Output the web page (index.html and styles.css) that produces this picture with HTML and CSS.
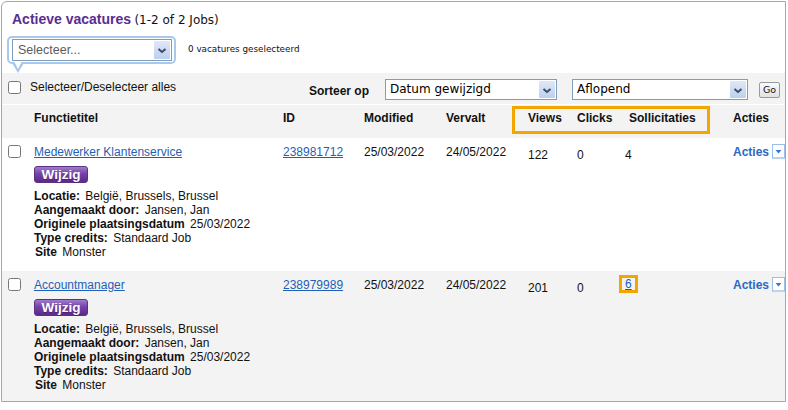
FILE: index.html
```html
<!DOCTYPE html>
<html lang="nl">
<head>
<meta charset="utf-8">
<title>Actieve vacatures</title>
<link rel="stylesheet" href="styles.css">
</head>
<body>
<div class="panel">
  <div class="title"><span class="t-main">Actieve vacatures</span> <span class="t-count">(1-2 of 2 Jobs)</span></div>

  <div class="bulk">
    <div class="bubble">
      <div class="select sel-bulk">
        <span class="sel-text">Selecteer...</span>
        <span class="sel-btn"><svg width="16" height="18" viewBox="0 0 16 18"><path d="M4.5 8 L8 11 L11.5 8" fill="none" stroke="#3d4b66" stroke-width="2"/></svg></span>
      </div>
    </div>
    <span class="bulk-count">0 vacatures geselecteerd</span>
  </div>

  <div class="toolbar">
    <label class="selall"><input type="checkbox" class="cb"><span>Selecteer/Deselecteer alles</span></label>
    <div class="sort">
      <span class="sort-label">Sorteer op</span>
      <div class="select sel-sort sel-sort1">
        <span class="sel-text">Datum gewijzigd</span>
        <span class="sel-btn"><svg width="16" height="17" viewBox="0 0 16 17"><path d="M4.5 8 L8 11 L11.5 8" fill="none" stroke="#3d4b66" stroke-width="2"/></svg></span>
      </div>
      <div class="select sel-sort sel-sort2">
        <span class="sel-text">Aflopend</span>
        <span class="sel-btn"><svg width="16" height="17" viewBox="0 0 16 17"><path d="M4.5 8 L8 11 L11.5 8" fill="none" stroke="#3d4b66" stroke-width="2"/></svg></span>
      </div>
      <button class="go" type="button">Go</button>
    </div>
  </div>

  <div class="grid head">
    <div></div>
    <div class="h">Functietitel</div>
    <div class="h">ID</div>
    <div class="h">Modified</div>
    <div class="h">Vervalt</div>
    <div class="h">Views</div>
    <div class="h">Clicks</div>
    <div class="h">Sollicitaties</div>
    <div class="h">Acties</div>
    <div class="hl-box"></div>
  </div>

  <div class="grid row">
    <div class="c-cb"><input type="checkbox" class="cb"></div>
    <div class="c">
      <a href="#" class="lnk">Medewerker Klantenservice</a>
      <div class="wijzig">Wijzig</div>
      <div class="details">
        <div><b>Locatie:</b> België, Brussels, Brussel</div>
        <div><b>Aangemaakt door:</b> Jansen, Jan</div>
        <div><b>Originele plaatsingsdatum</b> 25/03/2022</div>
        <div><b>Type credits:</b> Standaard Job</div>
        <div class="site"><b>Site</b> Monster</div>
      </div>
    </div>
    <div class="c"><a href="#" class="lnk">238981712</a></div>
    <div class="c">25/03/2022</div>
    <div class="c">24/05/2022</div>
    <div class="c c-num">122</div>
    <div class="c c-num">0</div>
    <div class="c c-num c-soll">4</div>
    <div class="c c-acties"><span class="acties">Acties</span><span class="acties-btn"><svg width="11" height="13" viewBox="0 0 11 13"><path d="M2.5 5 H8.5 L5.5 8.5 Z" fill="#3a78cf"/></svg></span></div>
  </div>

  <div class="grid row row-alt">
    <div class="c-cb"><input type="checkbox" class="cb"></div>
    <div class="c">
      <a href="#" class="lnk">Accountmanager </a>
      <div class="wijzig">Wijzig</div>
      <div class="details">
        <div><b>Locatie:</b> België, Brussels, Brussel</div>
        <div><b>Aangemaakt door:</b> Jansen, Jan</div>
        <div><b>Originele plaatsingsdatum</b> 25/03/2022</div>
        <div><b>Type credits:</b> Standaard Job</div>
        <div class="site"><b>Site</b> Monster</div>
      </div>
    </div>
    <div class="c"><a href="#" class="lnk">238979989</a></div>
    <div class="c">25/03/2022</div>
    <div class="c">24/05/2022</div>
    <div class="c c-num">201</div>
    <div class="c c-num">0</div>
    <div class="c c-soll-hl"><a href="#" class="lnk hl">6</a></div>
    <div class="c c-acties"><span class="acties">Acties</span><span class="acties-btn"><svg width="11" height="13" viewBox="0 0 11 13"><path d="M2.5 5 H8.5 L5.5 8.5 Z" fill="#3a78cf"/></svg></span></div>
  </div>
</div>
</body>
</html>
```

FILE: styles.css
```css
html, body {
  margin: 0;
  padding: 0;
  background: #fff;
}

.panel {
  margin: 1px 0 0 1px;
  width: 785px;
  height: 401px;
  box-sizing: border-box;
  border: 1px solid #a6a6a6;
  border-top-left-radius: 6px;
  overflow: hidden;
  font-family: "Liberation Sans", Arial, sans-serif;
  font-size: 12px;
  color: #111;
}

.title {
  padding: 8px 0 0 10px;
  height: 18px;
  line-height: 18px;
  white-space: nowrap;
}

.t-main {
  font-size: 14px;
  font-weight: bold;
  color: #5a2d8f;
}

.t-count {
  font-family: "DejaVu Sans", Verdana, sans-serif;
  font-size: 12px;
  color: #111;
}

.bulk {
  display: flex;
  align-items: flex-start;
  margin-top: 8px;
  padding-left: 5px;
  height: 37px;
}

.bubble {
  position: relative;
  border: 2px solid #a9c9ec;
  border-radius: 5px;
  padding: 1px 2px 1px 3px;
  background: #fff;
}

.bubble::before {
  content: "";
  position: absolute;
  left: 3px;
  top: calc(100% + 1px);
  border-top: 10px solid #a9c9ec;
  border-left: 6px solid transparent;
  border-right: 6px solid transparent;
}

.bubble::after {
  content: "";
  position: absolute;
  left: 5px;
  top: calc(100% - 1px);
  border-top: 8px solid #fff;
  border-left: 4px solid transparent;
  border-right: 4px solid transparent;
}

.select {
  display: flex;
  align-items: center;
  box-sizing: border-box;
  border: 1px solid #7f9db9;
  background: #fff;
}

.sel-text {
  flex: 1;
  white-space: nowrap;
  overflow: hidden;
}

.sel-btn {
  display: flex;
  align-self: stretch;
  margin: 1px;
  width: 16px;
  background: linear-gradient(#dfe8f7, #bccff0);
  border-radius: 1px;
}

.sel-bulk {
  width: 160px;
  height: 22px;
}

.sel-bulk .sel-text {
  padding-left: 5px;
  color: #5c5c5c;
  font-size: 12.5px;
}

.bulk-count {
  margin: 7px 0 0 12px;
  font-family: "DejaVu Sans", Verdana, sans-serif;
  font-size: 8.8px;
  line-height: 12px;
  white-space: nowrap;
}

.toolbar {
  display: flex;
  align-items: flex-start;
  height: 31px;
  background: #f3f3f3;
  border-bottom: 1px solid #fff;
}

.cb {
  margin: 0;
  width: 13px;
  height: 13px;
}

.selall {
  display: flex;
  align-items: center;
  gap: 9px;
  box-sizing: border-box;
  width: 307px;
  padding: 7px 0 0 6px;
  white-space: nowrap;
}

.sort {
  display: flex;
  align-items: center;
  padding-top: 6px;
}

.sort-label {
  font-weight: bold;
  margin: 3px 16px 0 0;
  white-space: nowrap;
}

.sel-sort {
  height: 21px;
  font-family: "DejaVu Sans", Verdana, sans-serif;
  font-size: 12px;
  color: #000;
}

.sel-sort .sel-text {
  padding: 0 0 2px 4px;
}

.sel-sort1 {
  width: 172px;
  margin-right: 15px;
}

.sel-sort2 {
  width: 176px;
  margin-right: 11px;
}

.go {
  width: 21px;
  height: 16px;
  padding: 0;
  border: 1px solid #9a9a9a;
  border-radius: 2px;
  background: linear-gradient(#fbfbfb, #e2e2e2);
  font-family: "DejaVu Sans", Verdana, sans-serif;
  font-size: 9.5px;
  color: #111;
}

.grid {
  display: grid;
  grid-template-columns: 32px 249px 81px 82px 82px 49px 52px 104px 1fr;
}

.head {
  position: relative;
  height: 33px;
  background: #f3f3f3;
  font-weight: bold;
}

.h {
  padding-top: 6px;
  line-height: 14px;
  white-space: nowrap;
}

.hl-box {
  position: absolute;
  left: 510px;
  top: 1px;
  width: 198px;
  height: 28px;
  box-sizing: border-box;
  border: 3px solid #f5a500;
}

.row {
  padding-bottom: 12px;
}

.row-alt {
  background: #f3f3f3;
  padding-bottom: 20px;
}

.c-cb {
  padding: 7px 0 0 6px;
}

.c {
  padding-top: 7px;
  line-height: 14px;
  white-space: nowrap;
}

.c-num {
  padding-top: 10px;
}

.c-soll {
  margin-left: -4px;
}

.c-soll-hl {
  padding-top: 4px;
}

.lnk {
  color: #1f5fb5;
  text-decoration: underline;
}

.hl {
  display: inline-block;
  margin-left: -10px;
  padding: 0 3px;
  line-height: 12px;
  border: 3px solid #f5a500;
}

.wijzig {
  width: 54px;
  height: 17px;
  box-sizing: border-box;
  margin-top: 7px;
  border-radius: 3px;
  background: linear-gradient(#a27ccb, #7443a8 45%, #5a2a88);
  border: 1px solid #5b3185;
  color: #fff;
  font-weight: bold;
  font-size: 13.5px;
  line-height: 15px;
  text-align: center;
  text-shadow: 0 1px 0 #4a1f74;
}

.details {
  margin-top: 6px;
  line-height: 14px;
}

.details b {
  margin-right: 2px;
}

.site {
  padding-left: 1px;
}

.c-acties {
  display: flex;
  align-items: flex-start;
}

.acties {
  font-weight: bold;
  color: #2b69c2;
}

.acties-btn {
  display: flex;
  margin: -1px 0 0 3px;
  width: 13px;
  height: 15px;
  box-sizing: border-box;
  border: 1px solid #9dbde6;
  border-bottom: 2px solid #bcd3ef;
  background: #fff;
}
```
